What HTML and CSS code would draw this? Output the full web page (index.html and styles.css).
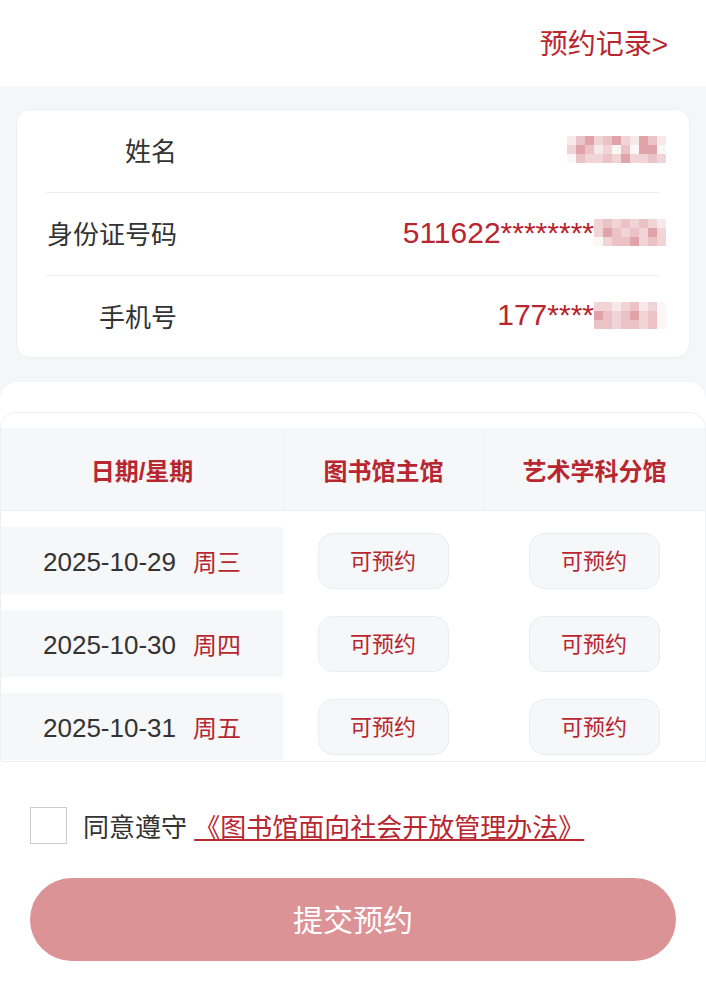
FILE: index.html
```html
<!DOCTYPE html>
<html lang="zh">
<head>
    <meta charset="UTF-8">
    <meta name="viewport" content="width=device-width, initial-scale=1.0">
    <title>预约</title>
    <link rel="stylesheet" href="styles.css">
</head>
<body>
    <div class="topbar">
        <a class="record-link" href="#">预约记录&gt;</a>
    </div>

    <div class="page">
        <!-- 个人信息 -->
        <div class="info-card">
            <div class="info-row">
                <div class="info-label">姓名</div>
                <div class="info-value">
                    <span class="mosaic cols-11">
                        <i class="a"></i><i class="b"></i><i class="c"></i><i class="d"></i><i class="b"></i><i class="c"></i><i class="d"></i><i class="a"></i><i class="c"></i><i class="b"></i><i class="a"></i>
                        <i class="d"></i><i class="c"></i><i class="b"></i><i class="a"></i><i class="d"></i><i class="e"></i><i class="b"></i><i class="e"></i><i class="c"></i><i class="c"></i><i class="e"></i>
                        <i class="e"></i><i class="b"></i><i class="d"></i><i class="d"></i><i class="b"></i><i class="d"></i><i class="c"></i><i class="d"></i><i class="d"></i><i class="b"></i><i class="d"></i>
                    </span>
                </div>
            </div>
            <div class="info-row">
                <div class="info-label">身份证号码</div>
                <div class="info-value">511622********<span class="mosaic cols-8">
                        <i class="d"></i><i class="b"></i><i class="d"></i><i class="b"></i><i class="d"></i><i class="b"></i><i class="d"></i><i class="a"></i>
                        <i class="d"></i><i class="c"></i><i class="b"></i><i class="d"></i><i class="b"></i><i class="d"></i><i class="c"></i><i class="d"></i>
                        <i class="e"></i><i class="d"></i><i class="b"></i><i class="b"></i><i class="c"></i><i class="d"></i><i class="b"></i><i class="d"></i>
                    </span></div>
            </div>
            <div class="info-row">
                <div class="info-label">手机号</div>
                <div class="info-value">177****<span class="mosaic cols-8">
                        <i class="d"></i><i class="d"></i><i class="a"></i><i class="d"></i><i class="b"></i><i class="a"></i><i class="d"></i><i class="e"></i>
                        <i class="c"></i><i class="b"></i><i class="d"></i><i class="b"></i><i class="c"></i><i class="d"></i><i class="b"></i><i class="e"></i>
                        <i class="b"></i><i class="b"></i><i class="d"></i><i class="b"></i><i class="b"></i><i class="d"></i><i class="b"></i><i class="e"></i>
                    </span></div>
            </div>
        </div>

        <!-- 预约表 -->
        <div class="booking">
            <div class="table-wrap">
                <table class="slots">
                    <colgroup>
                        <col class="col-date">
                        <col class="col-main">
                        <col>
                    </colgroup>
                    <thead>
                        <tr>
                            <th>日期/星期</th>
                            <th>图书馆主馆</th>
                            <th>艺术学科分馆</th>
                        </tr>
                    </thead>
                    <tbody>
                        <tr>
                            <td class="date-cell">2025-10-29<span class="week">周三</span></td>
                            <td><button class="slot-btn">可预约</button></td>
                            <td><button class="slot-btn">可预约</button></td>
                        </tr>
                        <tr>
                            <td class="date-cell">2025-10-30<span class="week">周四</span></td>
                            <td><button class="slot-btn">可预约</button></td>
                            <td><button class="slot-btn">可预约</button></td>
                        </tr>
                        <tr>
                            <td class="date-cell">2025-10-31<span class="week">周五</span></td>
                            <td><button class="slot-btn">可预约</button></td>
                            <td><button class="slot-btn">可预约</button></td>
                        </tr>
                    </tbody>
                </table>
            </div>

            <label class="agree">
                <span class="checkbox"></span>
                <span class="agree-text">同意遵守 <a class="rule-link" href="#">《图书馆面向社会开放管理办法》</a></span>
            </label>

            <div class="submit-wrap">
                <button class="submit-btn">提交预约</button>
            </div>
        </div>
    </div>
</body>
</html>
```

FILE: styles.css
```css
body {
    margin: 0;
    padding: 0;
    font-family: "Liberation Sans", "Noto Sans CJK SC", sans-serif;
    background: #f5f6f8;
    color: #333;
}

.topbar {
    height: 86px;
    background: #fff;
    display: flex;
    align-items: center;
    justify-content: flex-end;
    padding-right: 38px;
}

.record-link {
    color: #b8262f;
    font-size: 28px;
    text-decoration: none;
    margin-top: -2px;
}

.page {
    padding-top: 23px;
}

.info-card {
    margin: 0 16px;
    background: #fff;
    border: 1px solid #eeeff1;
    border-radius: 14px;
    padding: 0 29px;
}

.info-row {
    height: 82px;
    display: flex;
    align-items: center;
    border-bottom: 1px solid #eeeff1;
}

.info-row:last-child {
    border-bottom: none;
    height: 81px;
}

.info-label {
    width: 131px;
    text-align: right;
    font-size: 26px;
    color: #333;
    margin-top: -3px;
}

.info-value {
    flex: 1;
    display: flex;
    justify-content: flex-end;
    align-items: center;
    font-size: 30px;
    color: #b8262f;
    margin-right: -6px;
    margin-top: -3px;
}

/* 打码 */
.mosaic {
    display: inline-grid;
    grid-auto-rows: 9px;
}

.mosaic.cols-11 {
    grid-template-columns: repeat(11, 9px);
}

.mosaic.cols-8 {
    grid-template-columns: repeat(8, 9px);
}

.mosaic i {
    display: block;
}

.mosaic .a { background: #f7e9ea; }
.mosaic .b { background: #ebc3c6; }
.mosaic .c { background: #e0a4a8; }
.mosaic .d { background: #f0d4d6; }
.mosaic .e { background: #fcf6f6; }

.booking {
    margin-top: 24px;
    background: #fff;
    border-radius: 18px 18px 0 0;
    padding-top: 30px;
    padding-bottom: 30px;
}

.table-wrap {
    height: 348px;
    overflow: hidden;
    border: 1px solid #eeeff1;
    border-radius: 16px 16px 0 0;
}

.slots {
    width: 100%;
    table-layout: fixed;
    border-collapse: separate;
    border-spacing: 0 16px;
    margin-top: -1px;
}

.col-date {
    width: 282px;
}

.col-main {
    width: 200px;
}

.slots th {
    height: 82px;
    padding: 0;
    background: #f6f7f9;
    color: #b8262f;
    font-size: 24px;
    font-weight: bold;
    border-bottom: 1px solid #eeeff1;
    border-left: 1px solid #f0f1f3;
}

.slots th:first-child {
    border-left: none;
}

.slots td {
    height: 67px;
    padding: 0;
    text-align: center;
}

.date-cell {
    background: #f6f7f9;
    font-size: 26px;
    color: #333;
}

.week {
    color: #b8262f;
    font-size: 24px;
    margin-left: 17px;
}

.slot-btn {
    width: 131px;
    height: 56px;
    background: #f6f7f9;
    border: 1px solid #ebecee;
    border-radius: 15px;
    color: #b8262f;
    font-family: "Liberation Sans", "Noto Sans CJK SC", sans-serif;
    font-size: 22px;
    padding: 0 0 4px;
    vertical-align: middle;
}

.agree {
    display: flex;
    align-items: center;
    padding: 0 30px;
    margin-top: 45px;
}

.checkbox {
    width: 35px;
    height: 35px;
    border: 1px solid #cccccc;
    flex-shrink: 0;
}

.agree-text {
    margin-left: 16px;
    font-size: 26px;
    color: #333;
}

.rule-link {
    color: #b8262f;
    text-decoration: underline;
}

.submit-wrap {
    padding: 0 30px;
    margin-top: 34px;
}

.submit-btn {
    width: 100%;
    height: 83px;
    border: none;
    border-radius: 42px;
    background: #dc9396;
    color: #fff;
    font-family: "Liberation Sans", "Noto Sans CJK SC", sans-serif;
    font-size: 30px;
    padding: 0 0 4px;
}
```
